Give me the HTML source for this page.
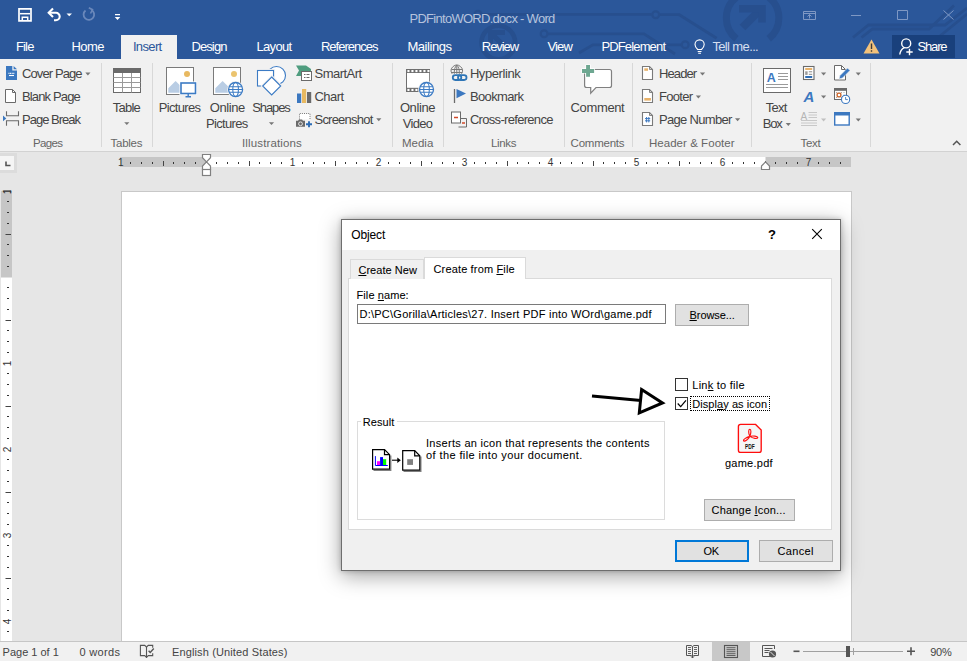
<!DOCTYPE html>
<html><head><meta charset="utf-8"><title>PDFintoWORD.docx - Word</title>
<style>
html,body{margin:0;padding:0}
body{width:967px;height:661px;overflow:hidden;position:relative;background:#e6e6e6;font-family:"Liberation Sans",sans-serif;font-size:11px;color:#444}
.a{position:absolute}
.t{position:absolute;white-space:pre;line-height:1}
.k{-webkit-text-stroke:.06px #000}
u{text-decoration:underline;text-underline-offset:1px}
#titlebar{left:0;top:0;width:967px;height:59px;background:#2b579a}
#ribbon{left:0;top:59px;width:967px;height:92px;background:#f1f1f1;border-bottom:1px solid #d2d2d2}
.sep{position:absolute;top:63px;width:1px;height:84px;background:#d8d8d8}
#status{left:0;top:641px;width:967px;height:20px;background:#f1f1f1;border-top:1px solid #c6c6c6;box-sizing:border-box}
#page{left:121px;top:191px;width:731px;height:451px;background:#fff;border:1px solid #c8c8c8;border-bottom:none;box-sizing:border-box}
#dlg{left:341px;top:219px;width:500px;height:352px;background:#f0f0f0;border:1px solid #6e6e6e;box-sizing:border-box;box-shadow:0 5px 20px rgba(0,0,0,.36),0 0 5px rgba(0,0,0,.22)}
.btn{position:absolute;box-sizing:border-box;background:#e1e1e1;border:1px solid #adadad}
</style></head><body>
<div class="a" id="titlebar"></div>
<div class="a" id="ribbon"></div>
<!--SEPS-->
<div class="a" id="page"></div>
<div class="a" id="status"></div>
<div class="a" id="dlg"></div>
<!-- title bar decoration -->
<svg class="a" style="left:0;top:0" width="967" height="59" viewBox="0 0 967 59">
 <g fill="none" stroke="#274f8e" stroke-width="2.800">
  <path d="M482 14.400H651.500M660 14.700H679.300L716.600 38.300"/>
  <circle cx="655.700" cy="14.700" r="3.400" stroke-width="2.200"/>
  <path d="M548.300 33.800H644L675 54"/>
  <circle cx="544.100" cy="33.800" r="3.400" stroke-width="2.200"/>
  <path d="M579 53L592.900 44.800H681"/>
  <circle cx="685.200" cy="44.800" r="3.400" stroke-width="2.200"/>
  <path d="M853 37.500L868.500 25H945L967 8"/>
  <path d="M861.500 37.500L872.500 29H929L954 5.500"/>
  <path d="M940 36L967 14"/>
  <path d="M736.400 -2.700A26.300 26.300 0 0 0 736.400 38.700" stroke-width="7"/>
  <path d="M768.800 -2.700A26.300 26.300 0 0 1 768.800 38.700" stroke-width="7"/>
  <path d="M742.500 27.500L760 10" stroke-width="8"/><path d="M739 8.800H762V22.500" stroke-width="7.500"/>
  <circle cx="498.300" cy="42.500" r="16.800" stroke-width="4.600"/>
  <path d="M490.500 45.500V32.500H505M491.500 33.500L506 48" stroke-width="5"/>
  <circle cx="478" cy="14.200" r="3.400" stroke-width="2.200"/>
 </g>
</svg>
<!-- Insert tab -->
<div class="a" style="left:121px;top:35px;width:56px;height:24px;background:#f1f1f1"></div>
<!-- Share -->
<div class="a" style="left:892px;top:35px;width:63px;height:23px;background:#19407c"></div>
<!-- QAT icons -->
<svg class="a" style="left:0;top:0" width="140" height="35" viewBox="0 0 140 35">
 <g fill="none" stroke="#fff" stroke-width="1.700">
  <path d="M19 8.900H31V20.900H19Z"/>
  <path d="M20 13.700H30" stroke-width="1.500"/>
  <path d="M22.300 21V17.300H27.700V21" stroke-width="1.500"/>
  <path d="M49.500 12.800H56A3.700 3.700 0 0 1 56 20.200H54" stroke-width="2.100"/>
  <path d="M53 8.600L48.700 12.800L53 17" stroke-width="2.100"/>
 </g>
 <path d="M66.500 13.500H72L69.250 16.300Z" fill="#fff"/>
 <g fill="none" stroke="#6a88bb" stroke-width="1.800">
  <path d="M85.500 10.500A5.300 5.300 0 1 0 91.500 10"/>
  <path d="M88.800 7.800L92.500 9.700L90.500 13.500" stroke-width="1.600"/>
 </g>
 <path d="M115 14H120V15.200H115Z M114.700 17H120.300L117.500 20Z" fill="#fff"/>
</svg>
<!-- window controls -->
<svg class="a" style="left:795px;top:0" width="172" height="35" viewBox="795 0 172 35">
 <g fill="none" stroke="#7f98c4" stroke-width="1">
  <path d="M803.5 11.5H815.5V19.5H803.5Z"/><path d="M803.5 13.5H815.5"/>
  <path d="M809.5 18.5V14.5M807.5 16.5L809.5 14.5L811.5 16.5"/>
  <path d="M851 15.5H861"/>
  <path d="M897.5 10.5H907.5V19.5H897.5Z"/>
  <path d="M943.5 10.5L953.5 19.5M953.5 10.5L943.5 19.5"/>
 </g>
</svg>
<!-- tell me bulb, warning, share person -->
<svg class="a" style="left:690px;top:35px" width="277" height="24" viewBox="690 35 277 24">
 <g fill="none" stroke="#fff" stroke-width="1.1">
  <path d="M697.7 49.5C695.5 47.5 695 46 695 44.5A4.6 4.6 0 0 1 704.2 44.5C704.2 46 703.7 47.5 701.5 49.5Z"/>
  <path d="M697.7 51.5H701.5M698.2 53.3H701"/>
 </g>
 <path d="M871.5 39.5L879.5 53.5H863.5Z" fill="#f2c27b"/>
 <path d="M870.8 43.5H872.2V49H870.8ZM870.8 50.2H872.2V51.8H870.8Z" fill="#3b3b3b"/>
 <g fill="none" stroke="#fff" stroke-width="1.4">
  <circle cx="906.200" cy="43.400" r="4.500"/>
  <path d="M899.800 54.500C900.200 50.800 902 48.800 904.300 47.600"/>
  <path d="M906.300 52H912.700M909.500 48.800V55.200" stroke-width="1.400"/>
 </g>
</svg>
<div class="sep" style="left:101px"></div><div class="sep" style="left:152px"></div><div class="sep" style="left:392px"></div>
<div class="sep" style="left:443px"></div><div class="sep" style="left:564px"></div><div class="sep" style="left:632px"></div>
<div class="sep" style="left:751px"></div><div class="sep" style="left:870px"></div>
<svg class="a" style="left:0;top:59px" width="967" height="92" viewBox="0 59 967 92">
<defs>
 <path id="dd" d="M0 0H5.200L2.600 2.900Z" fill="#777"/>
 <g id="globe" fill="none" stroke="#3c7bc4" stroke-width="1.100">
  <circle cx="0" cy="0" r="8.400" fill="#f1f1f1" stroke="none"/>
  <circle cx="0" cy="0" r="7" fill="#fff" stroke-width="1.300"/>
  <ellipse cx="0" cy="0" rx="2.800" ry="7"/>
  <path d="M-7 0H7M-6.300 -2.800H6.300M-6.300 2.800H6.300"/>
 </g>
</defs>
<!-- dropdown arrows -->
<use href="#dd" x="85.3" y="72.6"/><use href="#dd" x="124.2" y="122.2"/><use href="#dd" x="268.9" y="122.2"/>
<use href="#dd" x="376.2" y="118.3"/><use href="#dd" x="699.9" y="72.6"/><use href="#dd" x="695.8" y="95.6"/>
<use href="#dd" x="735" y="118.3"/><use href="#dd" x="785.7" y="123"/><use href="#dd" x="821" y="72.6"/>
<use href="#dd" x="821" y="95.6"/><use href="#dd" x="821" y="118.6" opacity=".4"/><use href="#dd" x="855.7" y="72.6"/><use href="#dd" x="855.7" y="118.6"/>
<!-- Cover page -->
<path d="M6 66H12.300V70.500H17V80H6Z" fill="#3b78c0"/>
<path d="M13.600 66L17 69.300H13.600Z" fill="#3b78c0"/>
<path d="M8.500 73.300H14.500" stroke="#fff" stroke-width="1.200" stroke-dasharray="1 .6"/>
<path d="M9 75.500H14" stroke="#fff" stroke-width="1.100"/>
<!-- Blank page -->
<path d="M5.500 89.500H12.500L15.500 92.500V102.500H5.500Z" fill="#fff" stroke="#6a6a6a"/>
<path d="M12.500 89.500V92.500H15.500" fill="none" stroke="#6a6a6a"/>
<!-- Page break -->
<path d="M6.500 111.200V115.700H18.500V111.200M6.500 125.800V120.700H18.500V125.800" fill="none" stroke="#6a6a6a" stroke-width="1.100"/>
<path d="M3 115.600L6.300 118.400L3 121.200Z" fill="#3b78c0"/>
<!-- Table -->
<rect x="113.500" y="68.500" width="27" height="24" fill="#fff" stroke="#6a6a6a"/>
<rect x="113" y="68" width="28" height="5" fill="#6a6a6a"/>
<path d="M113.500 77.500H140.500M113.500 82.500H140.500M113.500 87.500H140.500M122.500 73V92.500M131.500 73V92.500" stroke="#9a9a9a" fill="none"/>
<!-- Pictures -->
<rect x="166.500" y="67.500" width="27" height="27" fill="#fff" stroke="#7a7a7a"/>
<path d="M168.300 92.800V88.200L175.600 81L183 88.200V92.800Z" fill="#b9cde4"/>
<circle cx="187" cy="74" r="3" fill="#e8b961"/>
<rect x="179.500" y="81.500" width="17.500" height="13.500" fill="#fff"/><rect x="181" y="83" width="14.500" height="10.500" fill="#fff" stroke="#3c7bc4" stroke-width="1.600"/>
<path d="M188.200 93.500V96.500M185.500 96.800H191" stroke="#3c7bc4" stroke-width="1.400"/>
<!-- Online pictures -->
<rect x="213.500" y="67.500" width="27" height="27" fill="#fff" stroke="#7a7a7a"/>
<path d="M215.300 92.800V88.200L222.600 81L230 88.200V92.800Z" fill="#b9cde4"/>
<circle cx="234" cy="74" r="3" fill="#ebc46f"/>
<use href="#globe" x="235.600" y="89.500"/>
<!-- Shapes -->
<g fill="#fff" stroke="#3c7bc4" stroke-width="1.100">
 <circle cx="276.500" cy="75.500" r="9"/>
 <rect x="257.500" y="70.500" width="16" height="15.500" stroke="#f1f1f1" stroke-width="3.200"/>
 <rect x="257.500" y="70.500" width="16" height="15.500"/>
 <path d="M271.700 77L280.700 86L271.700 95L262.700 86Z" stroke="#f1f1f1" stroke-width="3.200"/>
 <path d="M271.700 77L280.700 86L271.700 95L262.700 86Z"/>
</g>
<!-- SmartArt -->
<path d="M296 65.500H306L311 69V71.500H301.500V76H296L299 70.500Z" fill="#4f9d7f"/>
<rect x="301.500" y="71.500" width="10" height="9" fill="#fff" stroke="#6a6a6a"/>
<path d="M304 74.500H305.500M306.500 74.500H309.500M304 77.500H305.500M306.500 77.500H309.500" stroke="#6a6a6a"/>
<!-- Chart -->
<rect x="297" y="93.500" width="4.200" height="9.500" fill="#3c78c0"/>
<rect x="302" y="89" width="4.200" height="14" fill="#e8b961"/>
<rect x="307" y="92" width="4.200" height="11" fill="#6a6a6a"/>
<!-- Screenshot -->
<path d="M299.500 119.500V113.500H310V119.500" fill="#fff" stroke="#7a7a7a" stroke-dasharray="1 1.100"/>
<path d="M296 120.800H298L299 119.400H302L303 120.800H305V126.800H296Z" fill="#6a6a6a"/>
<circle cx="300.500" cy="123.800" r="1.900" fill="none" stroke="#f1f1f1" stroke-width=".9"/>
<path d="M306 124.200H312M309 121.200V127.200" stroke="#2e6db5" stroke-width="1.900"/>
<!-- Online video -->
<rect x="406" y="69" width="24" height="23" fill="#6f6f6f"/>
<rect x="407" y="73" width="22.200" height="14.800" fill="#fff"/>
<rect x="407.4" y="70" width="2.100" height="2.100" fill="#fff"/><rect x="411.4" y="70" width="2.100" height="2.100" fill="#fff"/><rect x="415.4" y="70" width="2.100" height="2.100" fill="#fff"/><rect x="419.4" y="70" width="2.100" height="2.100" fill="#fff"/><rect x="423.4" y="70" width="2.100" height="2.100" fill="#fff"/><rect x="427.4" y="70" width="2.100" height="2.100" fill="#fff"/><rect x="407.4" y="88.900" width="2.100" height="2.100" fill="#fff"/><rect x="411.4" y="88.900" width="2.100" height="2.100" fill="#fff"/><rect x="415.4" y="88.900" width="2.100" height="2.100" fill="#fff"/>
<use href="#globe" x="426.500" y="89.500"/>
<!-- Hyperlink -->
<g fill="none" stroke="#7a7a7a" stroke-width="1">
 <path d="M452.100 73.800A5.600 5.600 0 1 1 461.500 73.800"/>
 <path d="M451.600 69.500H462M451.300 72.500H462.300M456.800 65.200V73.800M454.300 73.800C454 70 455 66.500 456.800 65.200C458.600 66.500 459.600 70 459.300 73.800"/>
</g>
<g fill="none" stroke="#2e75b6" stroke-width="1.800">
 <rect x="452.800" y="75.200" width="8.500" height="4.800" rx="2.400"/>
 <rect x="458" y="75.200" width="8.500" height="4.800" rx="2.400"/>
</g>
<!-- Bookmark -->
<path d="M454.500 89V103" stroke="#6a6a6a" stroke-width="1.300"/>
<path d="M456.500 89L466 93.600L456.500 98.300Z" fill="#3c78c0"/>
<!-- Cross-ref -->
<g fill="#fff" stroke="#6a6a6a">
 <path d="M458.500 118.500H466.500V127H458.500" fill="none"/>
 <rect x="451.500" y="112" width="9" height="11"/>
</g>
<path d="M454 117.500H458M462 123H465" stroke="#d1492a" stroke-width="1.600"/>
<!-- Comment -->
<path d="M586.600 69.500H609.500Q611.500 69.500 611.500 71.500V85.500Q611.500 87.500 609.500 87.500H596L590.700 93.200V87.500H586.600Q584.600 87.500 584.600 85.500V71.500Q584.600 69.500 586.600 69.500Z" fill="#fff" stroke="#808080" stroke-width="1.200"/>
<path d="M585.400 64.400H590.700V68.300H594.800V73.600H590.700V77.500H585.400V73.600H581.300V68.300H585.400Z" fill="#fff"/>
<path d="M586.100 65.100H590V69H594.100V72.900H590V76.800H586.100V72.900H582V69H586.100Z" fill="#6ea791"/>
<!-- Header -->
<g fill="#fff" stroke="#7a7a7a" stroke-width="1.100">
 <path d="M642.500 66.500H649.500L652.500 69.500V79.500H642.500Z"/><path d="M649.500 66.500V69.500H652.500" fill="none" stroke-width=".9"/>
 <path d="M642.500 89.500H649.500L652.500 92.500V102.500H642.500Z"/><path d="M649.500 89.500V92.500H652.500" fill="none" stroke-width=".9"/>
 <path d="M642.500 112.500H649.500L652.500 115.500V125.500H642.500Z"/><path d="M649.500 112.500V115.500H652.500" fill="none" stroke-width=".9"/>
</g>
<rect x="644.300" y="68.300" width="3.700" height="2.500" fill="#e8b26a"/>
<rect x="644.300" y="98" width="6.600" height="2.600" fill="#e8b26a"/>
<path d="M645 118.600H650.200M645 120.800H650.200M646.600 117V122.400M648.800 117V122.400" stroke="#3c78c0" stroke-width="1"/>
<!-- Text box -->
<rect x="763.500" y="68.500" width="27" height="24" fill="#fff" stroke="#6a6a6a"/>
<path d="M778 73.500H788M778 76.500H788M778 79.500H788M766 84.500H788M766 87.500H788" stroke="#9a9a9a"/>
<text x="766.800" y="82" font-family="Liberation Sans,sans-serif" font-size="12.500" font-weight="bold" fill="#3c78c0">A</text>
<!-- Quick parts -->
<rect x="803.500" y="66.500" width="10.500" height="13" fill="#fff" stroke="#6a6a6a" stroke-width="1.100"/>
<rect x="805.200" y="68" width="7" height="2" fill="#e8b26a"/>
<rect x="805.200" y="71.300" width="2.400" height="3.600" fill="#9a9a9a"/>
<path d="M808.800 71.800H812.200M808.800 74.300H812.200" stroke="#7a7a7a" stroke-width=".9"/>
<rect x="805.200" y="76" width="7" height="2" fill="#2e6db5"/>
<!-- WordArt -->
<text x="803.600" y="101.600" font-family="Liberation Sans,sans-serif" font-size="15" font-weight="bold" font-style="italic" fill="#3c78c0">A</text>
<!-- Drop cap -->
<text x="800.500" y="119.500" font-family="Liberation Sans,sans-serif" font-size="10" fill="#b5b5b5">A</text>
<path d="M808.500 112.500H817M808.500 115H817M808.500 117.500H817M801 120.500H817M801 123H817M801 125.500H817" stroke="#c8c8c8"/>
<!-- Signature line -->
<path d="M834.500 65.500H841.500L845.500 69.500V80H834.500Z" fill="#fff" stroke="#6a6a6a"/>
<path d="M841.500 65.500V69.500H845.500" fill="none" stroke="#6a6a6a"/>
<path d="M839 79L840 75.500L847.500 68L850 70.500L842.500 78Z" fill="#3c78c0" stroke="#f1f1f1" stroke-width=".6"/>
<!-- Date time -->
<rect x="834.500" y="88.500" width="12" height="11" fill="#fff" stroke="#6a6a6a"/>
<rect x="834" y="88" width="13" height="2.800" fill="#6a6a6a"/>
<path d="M836 92.500H846M836 95H846M836 97.500H846" stroke="#9a9a9a" stroke-width=".8" stroke-dasharray="1 1.500"/>
<rect x="837.300" y="93.300" width="3.400" height="3.400" fill="#fff" stroke="#d1662a" stroke-width="1.200"/>
<circle cx="845.600" cy="99.400" r="4.100" fill="#fff" stroke="#3c78c0" stroke-width="1.100"/>
<path d="M845.600 97V99.600H847.800" fill="none" stroke="#3c78c0" stroke-width=".9"/>
<!-- Object -->
<rect x="834.700" y="113.200" width="14.500" height="11.800" fill="#fff" stroke="#3c78c0" stroke-width="1.400"/>
<rect x="834" y="112" width="16" height="3.500" fill="#3c78c0"/>
<!-- collapse chevron -->
<path d="M953 145L956.700 141.300L960.400 145" fill="none" stroke="#555" stroke-width="1.500"/>
</svg>
<!-- rulers -->
<div class="a" style="left:0;top:153px;width:17px;height:20px;background:#dcdcdc"></div>
<div class="a" style="left:0;top:156px;width:14px;height:14px;background:#f5f5f5"></div>
<svg class="a" style="left:0;top:151px" width="967" height="490" viewBox="0 151 967 490">
<defs><clipPath id="vr"><rect x="0" y="190.5" width="14" height="451"/></clipPath></defs>
<rect x="120" y="157" width="731" height="10" fill="#fff"/>
<rect x="120" y="157" width="86.5" height="10" fill="#c6c6c6"/>
<rect x="765.5" y="157" width="85.5" height="10" fill="#c6c6c6"/>
<rect x="130" y="162" width="1" height="2" fill="#333"/>
<rect x="141" y="162" width="1" height="2" fill="#333"/>
<rect x="152" y="162" width="1" height="2" fill="#333"/>
<rect x="163" y="161" width="1" height="5" fill="#444"/>
<rect x="173" y="162" width="1" height="2" fill="#333"/>
<rect x="184" y="162" width="1" height="2" fill="#333"/>
<rect x="195" y="162" width="1" height="2" fill="#333"/>
<rect x="216" y="162" width="1" height="2" fill="#333"/>
<rect x="227" y="162" width="1" height="2" fill="#333"/>
<rect x="238" y="162" width="1" height="2" fill="#333"/>
<rect x="249" y="161" width="1" height="5" fill="#444"/>
<rect x="259" y="162" width="1" height="2" fill="#333"/>
<rect x="270" y="162" width="1" height="2" fill="#333"/>
<rect x="281" y="162" width="1" height="2" fill="#333"/>
<text x="292.5" y="166" text-anchor="middle" font-size="10" fill="#333" font-family="Liberation Sans,sans-serif">1</text>
<rect x="302" y="162" width="1" height="2" fill="#333"/>
<rect x="313" y="162" width="1" height="2" fill="#333"/>
<rect x="324" y="162" width="1" height="2" fill="#333"/>
<rect x="335" y="161" width="1" height="5" fill="#444"/>
<rect x="345" y="162" width="1" height="2" fill="#333"/>
<rect x="356" y="162" width="1" height="2" fill="#333"/>
<rect x="367" y="162" width="1" height="2" fill="#333"/>
<text x="378.5" y="166" text-anchor="middle" font-size="10" fill="#333" font-family="Liberation Sans,sans-serif">2</text>
<rect x="388" y="162" width="1" height="2" fill="#333"/>
<rect x="399" y="162" width="1" height="2" fill="#333"/>
<rect x="410" y="162" width="1" height="2" fill="#333"/>
<rect x="421" y="161" width="1" height="5" fill="#444"/>
<rect x="431" y="162" width="1" height="2" fill="#333"/>
<rect x="442" y="162" width="1" height="2" fill="#333"/>
<rect x="453" y="162" width="1" height="2" fill="#333"/>
<text x="464.5" y="166" text-anchor="middle" font-size="10" fill="#333" font-family="Liberation Sans,sans-serif">3</text>
<rect x="474" y="162" width="1" height="2" fill="#333"/>
<rect x="485" y="162" width="1" height="2" fill="#333"/>
<rect x="496" y="162" width="1" height="2" fill="#333"/>
<rect x="507" y="161" width="1" height="5" fill="#444"/>
<rect x="517" y="162" width="1" height="2" fill="#333"/>
<rect x="528" y="162" width="1" height="2" fill="#333"/>
<rect x="539" y="162" width="1" height="2" fill="#333"/>
<text x="550.5" y="166" text-anchor="middle" font-size="10" fill="#333" font-family="Liberation Sans,sans-serif">4</text>
<rect x="560" y="162" width="1" height="2" fill="#333"/>
<rect x="571" y="162" width="1" height="2" fill="#333"/>
<rect x="582" y="162" width="1" height="2" fill="#333"/>
<rect x="593" y="161" width="1" height="5" fill="#444"/>
<rect x="603" y="162" width="1" height="2" fill="#333"/>
<rect x="614" y="162" width="1" height="2" fill="#333"/>
<rect x="625" y="162" width="1" height="2" fill="#333"/>
<text x="636.5" y="166" text-anchor="middle" font-size="10" fill="#333" font-family="Liberation Sans,sans-serif">5</text>
<rect x="646" y="162" width="1" height="2" fill="#333"/>
<rect x="657" y="162" width="1" height="2" fill="#333"/>
<rect x="668" y="162" width="1" height="2" fill="#333"/>
<rect x="679" y="161" width="1" height="5" fill="#444"/>
<rect x="689" y="162" width="1" height="2" fill="#333"/>
<rect x="700" y="162" width="1" height="2" fill="#333"/>
<rect x="711" y="162" width="1" height="2" fill="#333"/>
<text x="722.5" y="166" text-anchor="middle" font-size="10" fill="#333" font-family="Liberation Sans,sans-serif">6</text>
<rect x="732" y="162" width="1" height="2" fill="#333"/>
<rect x="743" y="162" width="1" height="2" fill="#333"/>
<rect x="754" y="162" width="1" height="2" fill="#333"/>
<rect x="765" y="161" width="1" height="5" fill="#444"/>
<rect x="775" y="162" width="1" height="2" fill="#333"/>
<rect x="786" y="162" width="1" height="2" fill="#333"/>
<rect x="797" y="162" width="1" height="2" fill="#333"/>
<text x="808.5" y="166" text-anchor="middle" font-size="10" fill="#333" font-family="Liberation Sans,sans-serif">7</text>
<rect x="818" y="162" width="1" height="2" fill="#333"/>
<rect x="829" y="162" width="1" height="2" fill="#333"/>
<rect x="840" y="162" width="1" height="2" fill="#333"/>
<text x="120.8" y="166" text-anchor="middle" font-size="10" fill="#333" font-family="Liberation Sans,sans-serif">1</text>
<g fill="#fff" stroke="#808080" stroke-width="1.2"><path d="M202.5 154.5H210.5V157.7L206.5 161.9L202.5 157.7Z"/><path d="M206.5 161.9L210.5 166.1V169.5H202.5V166.1Z"/><rect x="202.5" y="169.5" width="8" height="6"/>
<path d="M765.5 161.9L769.5 166.1V169.5H761.5V166.1Z"/></g>
<g clip-path="url(#vr)">
<rect x="1" y="190.5" width="11" height="451" fill="#fff"/>
<rect x="1" y="190.5" width="11" height="87.0" fill="#c6c6c6"/>
<text transform="translate(10.6 191.5) rotate(-90)" text-anchor="middle" font-size="10" fill="#333" font-family="Liberation Sans,sans-serif">1</text>
<rect x="7" y="201" width="2" height="1" fill="#333"/>
<rect x="7" y="212" width="2" height="1" fill="#333"/>
<rect x="7" y="223" width="2" height="1" fill="#333"/>
<rect x="5.5" y="234" width="5.5" height="1" fill="#444"/>
<rect x="7" y="244" width="2" height="1" fill="#333"/>
<rect x="7" y="255" width="2" height="1" fill="#333"/>
<rect x="7" y="266" width="2" height="1" fill="#333"/>
<rect x="7" y="287" width="2" height="1" fill="#333"/>
<rect x="7" y="298" width="2" height="1" fill="#333"/>
<rect x="7" y="309" width="2" height="1" fill="#333"/>
<rect x="5.5" y="320" width="5.5" height="1" fill="#444"/>
<rect x="7" y="330" width="2" height="1" fill="#333"/>
<rect x="7" y="341" width="2" height="1" fill="#333"/>
<rect x="7" y="352" width="2" height="1" fill="#333"/>
<text transform="translate(10.6 363.5) rotate(-90)" text-anchor="middle" font-size="10" fill="#333" font-family="Liberation Sans,sans-serif">1</text>
<rect x="7" y="373" width="2" height="1" fill="#333"/>
<rect x="7" y="384" width="2" height="1" fill="#333"/>
<rect x="7" y="395" width="2" height="1" fill="#333"/>
<rect x="5.5" y="406" width="5.5" height="1" fill="#444"/>
<rect x="7" y="416" width="2" height="1" fill="#333"/>
<rect x="7" y="427" width="2" height="1" fill="#333"/>
<rect x="7" y="438" width="2" height="1" fill="#333"/>
<text transform="translate(10.6 449.5) rotate(-90)" text-anchor="middle" font-size="10" fill="#333" font-family="Liberation Sans,sans-serif">2</text>
<rect x="7" y="459" width="2" height="1" fill="#333"/>
<rect x="7" y="470" width="2" height="1" fill="#333"/>
<rect x="7" y="481" width="2" height="1" fill="#333"/>
<rect x="5.5" y="492" width="5.5" height="1" fill="#444"/>
<rect x="7" y="502" width="2" height="1" fill="#333"/>
<rect x="7" y="513" width="2" height="1" fill="#333"/>
<rect x="7" y="524" width="2" height="1" fill="#333"/>
<text transform="translate(10.6 535.5) rotate(-90)" text-anchor="middle" font-size="10" fill="#333" font-family="Liberation Sans,sans-serif">3</text>
<rect x="7" y="545" width="2" height="1" fill="#333"/>
<rect x="7" y="556" width="2" height="1" fill="#333"/>
<rect x="7" y="567" width="2" height="1" fill="#333"/>
<rect x="5.5" y="578" width="5.5" height="1" fill="#444"/>
<rect x="7" y="588" width="2" height="1" fill="#333"/>
<rect x="7" y="599" width="2" height="1" fill="#333"/>
<rect x="7" y="610" width="2" height="1" fill="#333"/>
<text transform="translate(10.6 621.5) rotate(-90)" text-anchor="middle" font-size="10" fill="#333" font-family="Liberation Sans,sans-serif">4</text>
<rect x="7" y="631" width="2" height="1" fill="#333"/>
<text transform="translate(10.6 190.8) rotate(-90)" text-anchor="middle" font-size="10" fill="#333" font-family="Liberation Sans,sans-serif">1</text>
</g>
<path d="M6 161.5V165.5H10.5" fill="none" stroke="#555" stroke-width="1.6"/>
</svg>
<div class="a" style="left:712px;top:642px;width:38px;height:19px;background:#c8c8c8"></div>
<svg class="a" style="left:0;top:641px" width="967" height="20" viewBox="0 641 967 20">
 <!-- proofing -->
 <g fill="none" stroke="#555" stroke-width="1.100">
  <path d="M146.500 647L144.700 645.400H140.400V655.600H144.700L146.500 657.300"/>
  <path d="M146.500 646.800V658"/>
  <path d="M146.500 647L148.300 645.400H152.700V647.800M152.700 653.200V655.600H148.300L146.500 657.300"/>
  <path d="M148.600 650.800L150.200 652.500L153.800 648.500" stroke-width="1.400"/>
 </g>
 <!-- read mode -->
 <g fill="none" stroke="#555" stroke-width="1">
  <path d="M692.500 646.500L691 645.500H686.500V655.500H691L692.500 656.500L694 655.500H698.500V645.500H694L692.500 646.500V658"/>
  <path d="M688 647.500H691M688 649.500H691M688 651.500H691M688 653.500H691M694 647.500H697M694 649.500H697M694 651.500H697M694 653.500H697" stroke-width=".9"/>
  <path d="M691 656.500L692.500 658L694 656.500" stroke-width=".9"/>
 </g>
 <!-- print layout -->
 <rect x="724.500" y="645.500" width="13" height="12" fill="none" stroke="#555" stroke-width="1.100"/>
 <path d="M726.500 647.700H735.500M726.500 649.700H735.500M726.500 651.700H735.500M726.500 653.700H735.500M726.500 655.500H735.500" stroke="#555" stroke-width=".9"/>
 <!-- web layout -->
 <path d="M770 656.500H762.500V645.500H774.500V649" fill="none" stroke="#555"/>
 <path d="M764.500 648.500H772.500M764.500 650.500H769.500M764.500 652.500H768.500" stroke="#555"/>
 <circle cx="772.500" cy="654" r="3.600" fill="#555"/>
 <path d="M770.500 652L774.500 656" stroke="#f1f1f1" stroke-width=".9"/>
 <!-- zoom -->
 <rect x="793.500" y="650.500" width="6" height="1.600" fill="#555"/>
 <rect x="803" y="651" width="100" height="1" fill="#a0a0a0"/>
 <rect x="853" y="648" width="1" height="7" fill="#a0a0a0"/>
 <rect x="846" y="646" width="4" height="11" fill="#555"/>
 <path d="M907 651.300H915M911 647.300V655.300" stroke="#555" stroke-width="1.600"/>
</svg>
<!-- dialog internals (absolute page coords) -->
<div class="a" style="left:342px;top:220px;width:498px;height:30px;background:#fff"></div>
<!-- tab panel -->
<div class="a" style="left:348px;top:278px;width:484px;height:252px;background:#fff;border:1px solid #dadada;box-sizing:border-box"></div>
<!-- inactive tab -->
<div class="a" style="left:350px;top:259px;width:74px;height:20px;background:#f0f0f0;border:1px solid #dadada;border-bottom:none;box-sizing:border-box"></div>
<!-- active tab -->
<div class="a" style="left:424px;top:257px;width:102px;height:22px;background:#fff;border:1px solid #dadada;border-bottom:none;box-sizing:border-box"></div>
<!-- file input -->
<div class="a" style="left:357px;top:304px;width:309px;height:20px;background:#fff;border:1px solid #7a7a7a;box-sizing:border-box"></div>
<!-- buttons -->
<div class="btn" style="left:675px;top:304px;width:74px;height:22px"></div>
<div class="btn" style="left:704px;top:499px;width:91px;height:22px"></div>
<div class="btn" style="left:675px;top:540px;width:74px;height:22px;border:2px solid #0078d7"></div>
<div class="btn" style="left:759px;top:540px;width:74px;height:22px"></div>
<!-- group box -->
<div class="a" style="left:357px;top:421px;width:308px;height:99px;border:1px solid #dcdcdc;box-sizing:border-box"></div>
<div class="a" style="left:361px;top:414px;width:36px;height:14px;background:#fff"></div>
<!-- checkboxes -->
<div class="a" style="left:675px;top:378px;width:13px;height:13px;background:#fff;border:1px solid #333;box-sizing:border-box"></div>
<div class="a" style="left:675px;top:397px;width:13px;height:13px;background:#fff;border:1px solid #333;box-sizing:border-box"></div>
<div class="a" style="left:690px;top:396px;width:80px;height:15px;border:1px dotted #000;box-sizing:border-box"></div>
<svg class="a" style="left:342px;top:220px" width="498" height="350" viewBox="342 220 498 350">
 <!-- close X -->
 <path d="M812.200 229.200L821.800 238.800M821.800 229.200L812.200 238.800" stroke="#000" stroke-width="1.100" fill="none"/>
 <!-- check -->
 <path d="M677.700 403.500L680.700 406.700L686 400.300" stroke="#000" stroke-width="1.200" fill="none"/>
 <!-- arrow annotation -->
 <path d="M592 395.900L641 400.600" stroke="#000" stroke-width="3" fill="none"/>
 <path d="M641.600 389.500L662.500 403L639.300 412.800Z" stroke="#000" stroke-width="3" fill="#fff" stroke-linejoin="miter"/>
 <!-- result icons -->
 <path d="M373.500 470.300H390.800V455.500M403.500 471.300H420.900V456.500" stroke="#808080" stroke-width="1.200" fill="none"/>
 <g fill="#fff" stroke="#000" stroke-width="1.200">
  <path d="M372.600 449.600H384.500L389.600 454.700V469.100H372.600Z"/>
  <path d="M384.500 449.600V454.700H389.600" fill="none"/>
  <path d="M402.700 450.700H414.700L419.800 455.800V470.100H402.700Z"/>
  <path d="M414.700 450.700V455.800H419.800" fill="none"/>
 </g>
 <rect x="377" y="461.200" width="3.100" height="4" fill="#ff00ff"/>
 <rect x="380.100" y="457.100" width="2.900" height="8.200" fill="#0000ff"/>
 <rect x="383" y="459.200" width="3.200" height="6" fill="#00ff00"/>
 <path d="M375.400 456.100V465.500H387.800" stroke="#0000ff" stroke-width="1" fill="none"/>
 <rect x="407.200" y="459.200" width="5.800" height="5.700" fill="#808080"/>
 <path d="M392 460.200H398" stroke="#000" stroke-width="1.100" fill="none"/>
 <path d="M397.300 457.500L400.800 460.200L397.300 462.900Z" fill="#000"/>
 <!-- pdf icon -->
 <path d="M740.600 424.400H755.600L761.200 430V450.200Q761.200 452.400 759 452.400H740.600Q738.400 452.400 738.400 450.200V426.600Q738.400 424.400 740.600 424.400Z" fill="#f6f6f6" stroke="#ff0d0d" stroke-width="1.350"/>
 <g fill="none" stroke="#ff0d0d" stroke-width="1.150">
  <path d="M749.800 436.400C748.400 433 748.200 429.500 749.800 429.300C751.400 429.500 751.100 433 749.800 436.400"/>
  <path d="M749.800 436.400C748.500 439 745 441.700 743.700 440.900C742.700 439.800 746 437.500 749.800 436.400"/>
  <path d="M749.800 436.400C753 435.600 757.600 436.200 757.800 437.600C757.400 439.100 753 438.600 749.800 436.400"/>
 </g>
 <text x="749.900" y="449" text-anchor="middle" font-family="Liberation Sans,sans-serif" font-size="6.500" font-weight="bold" fill="#111" textLength="9.700" lengthAdjust="spacingAndGlyphs">PDF</text>
</svg>

<span class="t" style="left:409.5px;top:12.1px;letter-spacing:-0.72px;color:#b5c3dd;font-size:13px">PDFintoWORD.docx - Word</span>
<span class="t" style="left:15.9px;top:40.3px;letter-spacing:-0.81px;color:#ffffff;font-size:13px">File</span>
<span class="t" style="left:71.4px;top:40.3px;letter-spacing:-0.50px;color:#ffffff;font-size:13px">Home</span>
<span class="t" style="left:132.9px;top:40.3px;letter-spacing:-0.64px;color:#2b579a;font-size:13px">Insert</span>
<span class="t" style="left:191.4px;top:40.3px;letter-spacing:-0.88px;color:#ffffff;font-size:13px">Design</span>
<span class="t" style="left:256.4px;top:40.3px;letter-spacing:-0.64px;color:#ffffff;font-size:13px">Layout</span>
<span class="t" style="left:320.9px;top:40.3px;letter-spacing:-0.98px;color:#ffffff;font-size:13px">References</span>
<span class="t" style="left:407.4px;top:40.3px;letter-spacing:-0.44px;color:#ffffff;font-size:13px">Mailings</span>
<span class="t" style="left:481.8px;top:40.3px;letter-spacing:-1.05px;color:#ffffff;font-size:13px">Review</span>
<span class="t" style="left:547.4px;top:40.3px;letter-spacing:-0.81px;color:#ffffff;font-size:13px">View</span>
<span class="t" style="left:601.4px;top:40.3px;letter-spacing:-0.85px;color:#ffffff;font-size:13px">PDFelement</span>
<span class="t" style="left:712.4px;top:40.3px;letter-spacing:-0.63px;color:#d5dff0;font-size:13px">Tell me...</span>
<span class="t" style="left:917.4px;top:40.3px;letter-spacing:-1.12px;color:#ffffff;font-size:13px">Share</span>
<span class="t" style="left:22.0px;top:66.9px;letter-spacing:-0.90px;color:#444444;font-size:13px">Cover Page</span>
<span class="t" style="left:22.0px;top:89.9px;letter-spacing:-0.85px;color:#444444;font-size:13px">Blank Page</span>
<span class="t" style="left:22.0px;top:112.9px;letter-spacing:-0.99px;color:#444444;font-size:13px">Page Break</span>
<span class="t" style="left:32.9px;top:137.6px;letter-spacing:-0.64px;color:#666666;font-size:11.5px">Pages</span>
<span class="t" style="left:112.7px;top:100.6px;letter-spacing:-0.74px;color:#444444;font-size:13px">Table</span>
<span class="t" style="left:110.6px;top:137.6px;letter-spacing:-0.29px;color:#666666;font-size:11.5px">Tables</span>
<span class="t" style="left:158.7px;top:100.6px;letter-spacing:-0.65px;color:#444444;font-size:13px">Pictures</span>
<span class="t" style="left:209.7px;top:100.6px;letter-spacing:-0.40px;color:#444444;font-size:13px">Online</span>
<span class="t" style="left:205.9px;top:116.6px;letter-spacing:-0.65px;color:#444444;font-size:13px">Pictures</span>
<span class="t" style="left:252.3px;top:100.6px;letter-spacing:-1.12px;color:#444444;font-size:13px">Shapes</span>
<span class="t" style="left:242.0px;top:137.6px;letter-spacing:0.14px;color:#666666;font-size:11.5px">Illustrations</span>
<span class="t" style="left:314.5px;top:66.9px;letter-spacing:-0.51px;color:#444444;font-size:13px">SmartArt</span>
<span class="t" style="left:314.5px;top:89.9px;letter-spacing:-0.56px;color:#444444;font-size:13px">Chart</span>
<span class="t" style="left:314.5px;top:112.9px;letter-spacing:-0.78px;color:#444444;font-size:13px">Screenshot</span>
<span class="t" style="left:399.9px;top:100.6px;letter-spacing:-0.40px;color:#444444;font-size:13px">Online</span>
<span class="t" style="left:402.7px;top:116.6px;letter-spacing:-0.66px;color:#444444;font-size:13px">Video</span>
<span class="t" style="left:401.9px;top:137.6px;letter-spacing:0.03px;color:#666666;font-size:11.5px">Media</span>
<span class="t" style="left:469.9px;top:66.9px;letter-spacing:-0.41px;color:#444444;font-size:13px">Hyperlink</span>
<span class="t" style="left:469.9px;top:89.9px;letter-spacing:-0.62px;color:#444444;font-size:13px">Bookmark</span>
<span class="t" style="left:469.9px;top:112.9px;letter-spacing:-0.69px;color:#444444;font-size:13px">Cross-reference</span>
<span class="t" style="left:491.0px;top:137.6px;letter-spacing:-0.33px;color:#666666;font-size:11.5px">Links</span>
<span class="t" style="left:570.6px;top:100.9px;letter-spacing:-0.37px;color:#444444;font-size:13px">Comment</span>
<span class="t" style="left:570.6px;top:137.6px;letter-spacing:-0.23px;color:#666666;font-size:11.5px">Comments</span>
<span class="t" style="left:658.9px;top:66.9px;letter-spacing:-0.87px;color:#444444;font-size:13px">Header</span>
<span class="t" style="left:658.9px;top:89.9px;letter-spacing:-0.68px;color:#444444;font-size:13px">Footer</span>
<span class="t" style="left:658.9px;top:112.9px;letter-spacing:-0.67px;color:#444444;font-size:13px">Page Number</span>
<span class="t" style="left:648.9px;top:137.6px;letter-spacing:0.05px;color:#666666;font-size:11.5px">Header &amp; Footer</span>
<span class="t" style="left:765.8px;top:100.9px;letter-spacing:-0.79px;color:#444444;font-size:13px">Text</span>
<span class="t" style="left:762.7px;top:117.1px;letter-spacing:-1.14px;color:#444444;font-size:13px">Box</span>
<span class="t" style="left:800.6px;top:137.6px;letter-spacing:-0.32px;color:#666666;font-size:11.5px">Text</span>
<span class="t" style="left:2.6px;top:646.6px;letter-spacing:-0.01px;color:#444444">Page 1 of 1</span>
<span class="t" style="left:79.5px;top:646.6px;letter-spacing:0.31px;color:#444444">0 words</span>
<span class="t" style="left:172.0px;top:646.6px;letter-spacing:0.13px;color:#444444">English (United States)</span>
<span class="t" style="left:930.2px;top:646.6px;letter-spacing:-0.21px;color:#444444">90%</span>
<span class="t k" style="left:351.3px;top:229.1px;letter-spacing:-0.13px;color:#000000;font-size:12.01px">Object</span>
<span class="t k" style="left:358.4px;top:265.0px;letter-spacing:0.05px;color:#000000"><u>C</u>reate New</span>
<span class="t k" style="left:433.5px;top:264.0px;letter-spacing:0.15px;color:#000000">Create from <u>F</u>ile</span>
<span class="t k" style="left:356.5px;top:290.0px;letter-spacing:0.09px;color:#000000">File <u>n</u>ame:</span>
<span class="t k" style="left:359.5px;top:309.0px;letter-spacing:0.24px;color:#000000">D:\PC\Gorilla\Articles\27. Insert PDF into WOrd\game.pdf</span>
<span class="t k" style="left:689.5px;top:310.0px;letter-spacing:-0.06px;color:#000000"><u>B</u>rowse...</span>
<span class="t k" style="left:692.3px;top:379.5px;letter-spacing:0.25px;color:#000000">Lin<u>k</u> to file</span>
<span class="t k" style="left:692.3px;top:399.0px;letter-spacing:0.06px;color:#000000">Displ<u>a</u>y as icon</span>
<span class="t k" style="left:362.7px;top:416.8px;letter-spacing:0.10px;color:#000000">Result</span>
<span class="t k" style="left:426.0px;top:437.5px;letter-spacing:0.29px;color:#000000">Inserts an icon that represents the contents</span>
<span class="t k" style="left:426.0px;top:449.9px;letter-spacing:0.40px;color:#000000">of the file into your document.</span>
<span class="t k" style="left:725.0px;top:458.0px;letter-spacing:0.24px;color:#000000">game.pdf</span>
<span class="t k" style="left:711.5px;top:505.0px;letter-spacing:0.20px;color:#000000">Change <u>I</u>con...</span>
<span class="t k" style="left:703.5px;top:546.0px;letter-spacing:-0.30px;color:#000000">OK</span>
<span class="t k" style="left:777.5px;top:546.0px;letter-spacing:0.34px;color:#000000">Cancel</span>
<span class="t k" style="left:768.0px;top:227.9px;letter-spacing:-0.73px;color:#000000;font-size:13px"><b>?</b></span>
</body></html>
